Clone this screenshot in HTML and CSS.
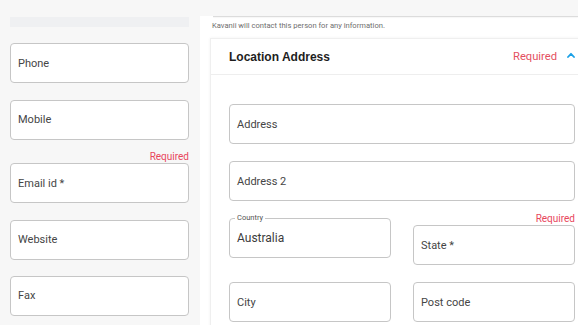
FILE: index.html
```html
<!DOCTYPE html>
<html lang="en">
<head>
	<meta charset="UTF-8">
	<title>Location Address</title>
	<link rel="stylesheet" href="styles.css">
</head>
<body>
	<div class="page">
		<aside class="side">
			<div class="side-bar"></div>
			<div class="box">Phone</div>
			<div class="box">Mobile</div>
			<div class="group">
				<div class="req">Required</div>
				<div class="box">Email id *</div>
			</div>
			<div class="box">Website</div>
			<div class="box">Fax</div>
		</aside>
		<main class="panel">
			<div class="prev-edge"></div>
			<p class="note">Kavanii will contact this person for any information.</p>
			<section class="card">
				<header class="card-head">
					<h2>Location Address</h2>
					<div class="head-right">
						<span class="req-head">Required</span>
						<svg class="chevron" width="8" height="6" viewBox="0 0 8 6">
							<polyline points="1,5 4,1.8 7,5" fill="none" stroke="#1aa0e6" stroke-width="1.8" stroke-linecap="round" stroke-linejoin="round"/>
						</svg>
					</div>
				</header>
				<div class="card-body">
					<div class="box">Address</div>
					<div class="box">Address 2</div>
					<div class="row">
						<div class="box outlined">
							<span class="float-label">Country</span>
							<span class="value">Australia</span>
						</div>
						<div class="group">
							<div class="req">Required</div>
							<div class="box">State *</div>
						</div>
					</div>
					<div class="row">
						<div class="box">City</div>
						<div class="box">Post code</div>
					</div>
				</div>
			</section>
		</main>
	</div>
</body>
</html>
```

FILE: styles.css
```css
* {
	margin: 0;
	padding: 0;
	box-sizing: border-box;
}
body {
	background: #f7f7f7;
	font-family: Roboto, "Liberation Sans", sans-serif;
	color: #444;
	overflow: hidden;
}
.page {
	display: flex;
	height: 325px;
	overflow: hidden;
}
.side {
	width: 200px;
	flex: none;
	padding: 17px 11px 0 10px;
	display: flex;
	flex-direction: column;
	gap: 16.4px;
}
.side-bar {
	height: 10px;
	background: #eff0f2;
}
.box {
	position: relative;
	height: 40px;
	flex: none;
	background: #fff;
	border: 1px solid #c6c6c6;
	border-radius: 4px;
	padding: 0 7px;
	display: flex;
	align-items: center;
	font-size: 11px;
	color: #454545;
}
.group {
	display: flex;
	flex-direction: column;
}
.req {
	margin-top: -5px;
	height: 12px;
	line-height: 12px;
	text-align: right;
	font-size: 10px;
	color: #e8465c;
}
.panel {
	flex: 1;
	min-width: 0;
	margin-top: 16px;
	background: #fff;
	padding-left: 10px;
	overflow: hidden;
}
.prev-edge {
	height: 1px;
	margin-left: 3px;
	background: #dcdcdc;
	box-shadow: 0 1px 1px rgba(0,0,0,.04);
}
.note {
	margin: 2px 0 5px 2px;
	font-size: 7.6px;
	line-height: 14px;
	color: #6e6e6e;
}
.card {
	margin-right: -16px;
	background: #fff;
	border: 1px solid #efefef;
	box-shadow: 0 0 3px rgba(0,0,0,.06);
}
.card-head {
	height: 36px;
	padding: 0 18px;
	border-bottom: 1px solid #eee;
	display: flex;
	align-items: center;
	justify-content: space-between;
}
.card-head h2 {
	font-family: "Liberation Sans", Arial, sans-serif;
	font-size: 12px;
	font-weight: bold;
	color: #1e1e1e;
}
.head-right {
	display: flex;
	align-items: center;
	gap: 10px;
}
.req-head {
	font-size: 11.2px;
	color: #e4505f;
}
.chevron {
	display: block;
	margin-top: -3px;
}
.card-body {
	padding: 29px 18px 20px;
	display: flex;
	flex-direction: column;
	gap: 17px;
}
.row {
	display: grid;
	grid-template-columns: 1fr 1fr;
	gap: 22px;
	align-items: start;
}
.outlined .value {
	font-size: 12px;
	color: #3c3c3c;
}
.float-label {
	position: absolute;
	top: -6px;
	left: 5px;
	padding: 0 2px;
	background: #fff;
	font-size: 7.5px;
	line-height: 10px;
	color: #555;
}
```
